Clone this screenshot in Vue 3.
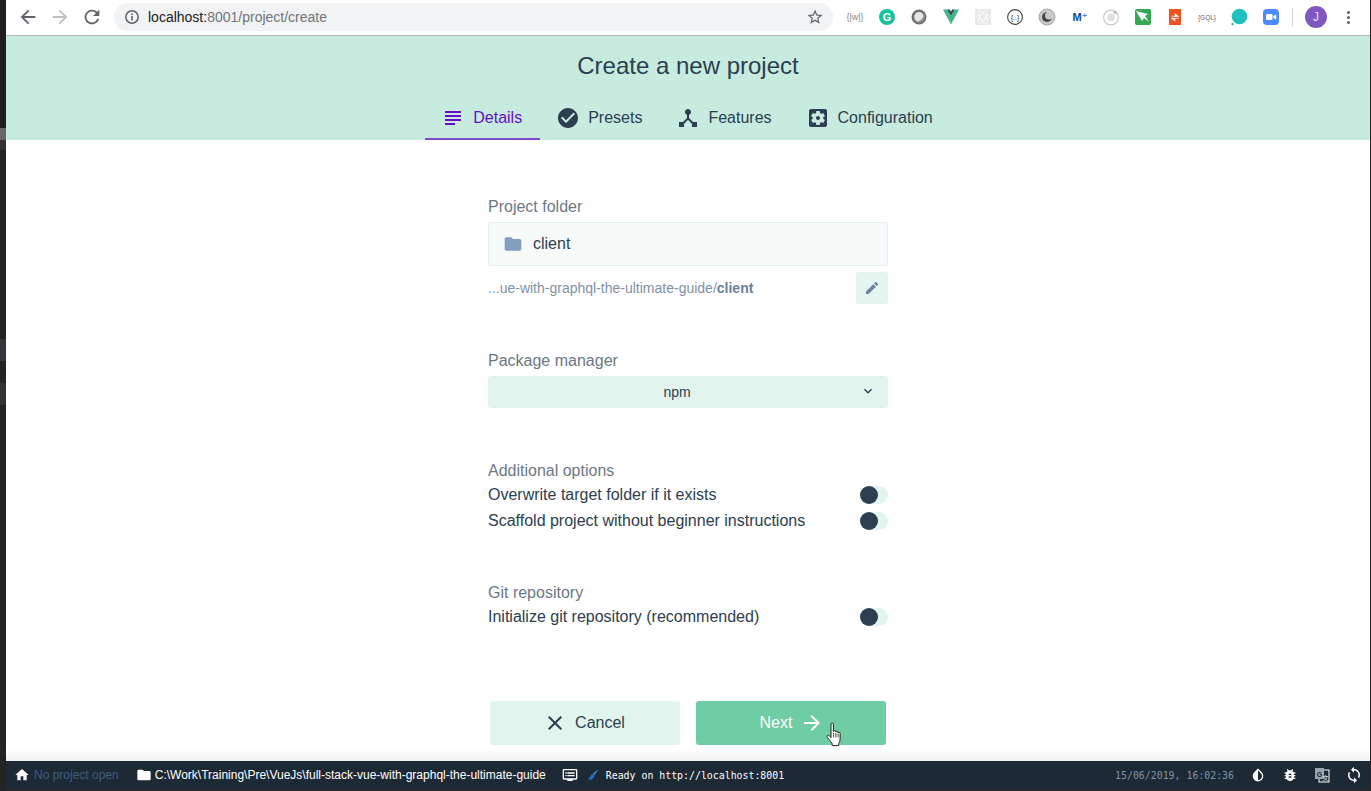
<script setup>
import { ref } from 'vue'

const tabs = [
  { label: 'Details', active: true, icon: 'M14 17H4v2h10v-2zm6-8H4v2h16V9zM4 15h16v-2H4v2zM4 5v2h16V5H4z' },
  { label: 'Presets', icon: 'M12 2C6.48 2 2 6.48 2 12s4.48 10 10 10 10-4.48 10-10S17.52 2 12 2zm-2 15l-5-5 1.41-1.41L10 14.17l7.59-7.59L19 8l-9 9z' },
  { label: 'Features', icon: 'M17 16l-4-4V8.82C14.16 8.4 15 7.3 15 6c0-1.66-1.34-3-3-3S9 4.34 9 6c0 1.3.84 2.4 2 2.82V12l-4 4H3v5h5v-3.05l4-4.2 4 4.2V21h5v-5h-4z' },
  { label: 'Configuration', icon: 'M12 10c-1.1 0-2 .9-2 2s.9 2 2 2 2-.9 2-2-.9-2-2-2zm7-7H5c-1.11 0-2 .9-2 2v14c0 1.1.89 2 2 2h14c1.11 0 2-.9 2-2V5c0-1.1-.89-2-2-2zm-1.75 9c0 .23-.02.46-.05.68l1.48 1.16c.13.11.17.3.08.45l-1.4 2.42c-.09.15-.27.21-.43.15l-1.74-.7c-.36.28-.76.51-1.18.69l-.26 1.85c-.03.17-.18.3-.35.3h-2.8c-.17 0-.32-.13-.35-.29l-.26-1.85c-.43-.18-.82-.41-1.18-.69l-1.74.7c-.16.06-.34 0-.43-.15l-1.4-2.42c-.09-.15-.05-.34.08-.45l1.48-1.16c-.03-.23-.05-.46-.05-.69 0-.23.02-.46.05-.68l-1.48-1.16c-.13-.11-.17-.3-.08-.45l1.4-2.42c.09-.15.27-.21.43-.15l1.74.7c.36-.28.76-.51 1.18-.69l.26-1.85c.03-.17.18-.3.35-.3h2.8c.17 0 .32.13.35.29l.26 1.85c.43.18.82.41 1.18.69l1.74-.7c.16-.06.34 0 .43.15l1.4 2.42c.09.15.05.34-.08.45l-1.48 1.16c.03.23.05.46.05.69z' },
]

const additional = ref([
  { label: 'Overwrite target folder if it exists', on: false },
  { label: 'Scaffold project without beginner instructions', on: false },
])
const gitOptions = ref([{ label: 'Initialize git repository (recommended)', on: false }])
</script>

<template>
  <div class="shell">
    <div class="left-strip"></div>
    <div class="main">
      <div class="browser-bar">
        <button class="nav-btn">
          <svg width="22" height="22" viewBox="0 0 24 24"><path fill="#5f6368" d="M20 11H7.83l5.59-5.59L12 4l-8 8 8 8 1.41-1.41L7.83 13H20v-2z" /></svg>
        </button>
        <button class="nav-btn">
          <svg width="22" height="22" viewBox="0 0 24 24"><path fill="#bdc1c6" d="M12 4l-1.41 1.41L16.17 11H4v2h12.17l-5.58 5.59L12 20l8-8z" /></svg>
        </button>
        <button class="nav-btn">
          <svg width="22" height="22" viewBox="0 0 24 24"><path fill="#5f6368" d="M17.65 6.35C16.2 4.9 14.21 4 12 4c-4.42 0-7.99 3.58-7.99 8s3.57 8 7.99 8c3.73 0 6.84-2.55 7.73-6h-2.08c-.82 2.33-3.04 4-5.65 4-3.31 0-6-2.69-6-6s2.69-6 6-6c1.66 0 3.14.69 4.22 1.78L13 11h7V4l-2.35 2.35z" /></svg>
        </button>
        <div class="address">
          <svg width="16" height="16" viewBox="0 0 16 16">
            <circle cx="8" cy="8" r="6.2" fill="none" stroke="#5f6368" stroke-width="1.5" />
            <rect x="7.2" y="7" width="1.6" height="4.4" fill="#5f6368" />
            <rect x="7.2" y="4.5" width="1.6" height="1.6" fill="#5f6368" />
          </svg>
          <span class="url"><b>localhost:</b>8001/project/create</span>
          <svg class="star" width="18" height="18" viewBox="0 0 24 24"><path fill="#5f6368" d="M22 9.24l-7.19-.62L12 2 9.19 8.63 2 9.24l5.46 4.73L5.82 21 12 17.27 18.18 21l-1.63-7.03L22 9.24zM12 15.4l-3.76 2.27 1-4.28-3.32-2.88 4.38-.38L12 6.1l1.71 4.04 4.38.38-3.32 2.88 1 4.28L12 15.4z" /></svg>
        </div>
        <div class="extensions">
          <span class="ext">
            <svg width="20" height="18" viewBox="0 0 20 18"><text x="10" y="12" text-anchor="middle" font-size="9" font-family="Liberation Sans, sans-serif" fill="#8a8a8a">{{ '{|w|}' }}</text></svg>
          </span>
          <span class="ext">
            <svg width="18" height="18" viewBox="0 0 18 18"><circle cx="9" cy="9" r="8" fill="#15c39a" /><text x="9" y="13" text-anchor="middle" font-size="11" font-weight="700" font-family="Liberation Sans, sans-serif" fill="#fff">G</text></svg>
          </span>
          <span class="ext">
            <svg width="18" height="18" viewBox="0 0 18 18"><circle cx="9" cy="9" r="6.2" fill="#e6e6e6" stroke="#6f6f6f" stroke-width="2.6" /><path d="M4.5 13.5a6.4 6.4 0 0 0 9-9 7.5 7.5 0 0 1-9 9z" fill="#8c8c8c" /></svg>
          </span>
          <span class="ext">
            <svg width="18" height="18" viewBox="0 0 18 18"><path d="M1 1.5h4.2L9 8l3.8-6.5H17L9 16.5z" fill="#41b883" /><path d="M5.2 1.5h2.6L9 3.7l1.2-2.2h2.6L9 8z" fill="#35495e" /></svg>
          </span>
          <span class="ext">
            <svg width="18" height="18" viewBox="0 0 18 18">
              <rect x="1" y="1" width="16" height="16" fill="#e8e8e8" />
              <g fill="none" stroke="#f8f8f8" stroke-width="1">
                <ellipse cx="9" cy="9" rx="7" ry="2.8" />
                <ellipse cx="9" cy="9" rx="7" ry="2.8" transform="rotate(60 9 9)" />
                <ellipse cx="9" cy="9" rx="7" ry="2.8" transform="rotate(120 9 9)" />
              </g>
            </svg>
          </span>
          <span class="ext">
            <svg width="18" height="18" viewBox="0 0 18 18"><circle cx="9" cy="9" r="7.4" fill="#fff" stroke="#444" stroke-width="1.1" /><text x="9" y="11.5" text-anchor="middle" font-size="7" font-family="Liberation Sans, sans-serif" fill="#333">{{ '{..}' }}</text></svg>
          </span>
          <span class="ext">
            <svg width="18" height="18" viewBox="0 0 18 18"><circle cx="9" cy="9" r="8" fill="#c9c9c9" stroke="#999" stroke-width=".8" /><circle cx="9" cy="9" r="5" fill="#444" /><circle cx="11" cy="7.6" r="4" fill="#c9c9c9" /></svg>
          </span>
          <span class="ext">
            <svg width="20" height="18" viewBox="0 0 20 18"><text x="8" y="13" text-anchor="middle" font-size="11" font-weight="700" font-family="Liberation Sans, sans-serif" fill="#0b4a8f">M</text><text x="15.5" y="10" text-anchor="middle" font-size="8" font-weight="700" font-family="Liberation Sans, sans-serif" fill="#3d8fd0">+</text></svg>
          </span>
          <span class="ext">
            <svg width="18" height="18" viewBox="0 0 18 18"><circle cx="9" cy="9.5" r="7.4" fill="#fff" stroke="#c8c8c8" stroke-width="1.2" /><circle cx="9" cy="9.5" r="3.8" fill="#dedede" /><circle cx="13" cy="4.5" r="1.2" fill="#aaa" /></svg>
          </span>
          <span class="ext">
            <svg width="18" height="18" viewBox="0 0 18 18"><rect x="1" y="1" width="16" height="16" rx="2" fill="#34a853" /><path d="M2 3l12 3-3 2 4 6-5-4-2 3z" fill="#fff" /></svg>
          </span>
          <span class="ext">
            <svg width="18" height="18" viewBox="0 0 18 18"><rect x="3" y="1" width="12" height="16" fill="#f4511e" /><path d="M5 8h4V5.5l4 3.2H9M13 10.5H9V13l-4-3h4" fill="#fff" stroke="#fff" stroke-width=".5" /></svg>
          </span>
          <span class="ext">
            <svg width="20" height="18" viewBox="0 0 20 18"><text x="10" y="11.5" text-anchor="middle" font-size="6.5" font-family="Liberation Sans, sans-serif" fill="#666">{{ '{GQL}' }}</text></svg>
          </span>
          <span class="ext">
            <svg width="18" height="18" viewBox="0 0 18 18"><circle cx="9.5" cy="8.5" r="7.8" fill="#1fc0bd" /><circle cx="2.5" cy="16" r="1.2" fill="#1fc0bd" /></svg>
          </span>
          <span class="ext">
            <svg width="18" height="18" viewBox="0 0 18 18"><rect x="1" y="1" width="16" height="16" rx="4" fill="#4a8cff" /><rect x="4" y="6" width="6.5" height="6" rx="1.2" fill="#fff" /><path d="M11.2 8.3l3-2v5.4l-3-2z" fill="#fff" /></svg>
          </span>
          <span class="divider"></span>
          <span class="avatar">J</span>
          <span class="dots"><i></i><i></i><i></i></span>
        </div>
      </div>

      <header class="page-header">
        <h1>Create a new project</h1>
        <nav class="tabs">
          <a v-for="tab in tabs" :key="tab.label" class="tab" :class="{ 'tab--active': tab.active }">
            <svg width="24" height="24" viewBox="0 0 24 24"><path fill="currentColor" :d="tab.icon" /></svg>
            <span>{{ tab.label }}</span>
          </a>
        </nav>
      </header>

      <section class="content">
        <div class="form">
          <div class="form-group">
            <div class="group-title">Project folder</div>
            <div class="folder-input">
              <svg width="20" height="20" viewBox="0 0 24 24"><path fill="#849fbd" d="M10 4H4c-1.1 0-1.99.9-1.99 2L2 18c0 1.1.9 2 2 2h16c1.1 0 2-.9 2-2V8c0-1.1-.9-2-2-2h-8l-2-2z" /></svg>
              <span>client</span>
            </div>
            <div class="path-row">
              <span class="path">...ue-with-graphql-the-ultimate-guide/<b>client</b></span>
              <button class="edit-btn">
                <svg width="16" height="16" viewBox="0 0 24 24"><path fill="#6b8199" d="M3 17.25V21h3.75L17.81 9.94l-3.75-3.75L3 17.25zM20.71 7.04c.39-.39.39-1.02 0-1.41l-2.34-2.34c-.39-.39-1.02-.39-1.41 0l-1.83 1.83 3.75 3.75 1.83-1.83z" /></svg>
              </button>
            </div>
          </div>

          <div class="form-group group-manager">
            <div class="group-title">Package manager</div>
            <div class="select">
              <span>npm</span>
              <svg class="chevron" width="16" height="16" viewBox="0 0 24 24"><path fill="#2c3e50" d="M16.59 8.59L12 13.17 7.41 8.59 6 10l6 6 6-6z" /></svg>
            </div>
          </div>

          <div class="form-group group-options">
            <div class="group-title">Additional options</div>
            <div v-for="opt in additional" :key="opt.label" class="option">
              <span>{{ opt.label }}</span>
              <span class="switch"><i></i></span>
            </div>
          </div>

          <div class="form-group group-git">
            <div class="group-title">Git repository</div>
            <div v-for="opt in gitOptions" :key="opt.label" class="option">
              <span>{{ opt.label }}</span>
              <span class="switch"><i></i></span>
            </div>
          </div>
        </div>

        <div class="actions">
          <button class="btn btn--cancel">
            <svg width="24" height="24" viewBox="0 0 24 24"><path fill="currentColor" d="M19 6.41L17.59 5 12 10.59 6.41 5 5 6.41 10.59 12 5 17.59 6.41 19 12 13.41 17.59 19 19 17.59 13.41 12z" /></svg>
            <span>Cancel</span>
          </button>
          <button class="btn btn--next">
            <span>Next</span>
            <svg width="24" height="24" viewBox="0 0 24 24"><path fill="currentColor" d="M12 4l-1.41 1.41L16.17 11H4v2h12.17l-5.58 5.59L12 20l8-8z" /></svg>
            <svg class="hand" width="17" height="25" viewBox="0 0 17 25">
              <path fill="#fff" stroke="#222" stroke-width="1" stroke-linejoin="round" d="M5 2.2c0-1.5 2.4-1.5 2.4 0v7.3c0-1.3 2.3-1.3 2.3 0v.6c0-1.2 2.2-1.2 2.2.1v.8c0-1.1 2.2-1 2.2.3v5.7c0 2.2-.8 3.2-1.4 4.6v2H6.2v-2c-1-1.5-2.2-2.6-3.4-4.4-.7-1-2-2.5-1.6-3.4.5-1.1 1.8-.7 2.4.1L5 15.5z" />
              <path fill="none" stroke="#222" stroke-width=".8" d="M7.6 11v4.5M9.9 11v4.5M12.1 11.5v4" />
            </svg>
          </button>
        </div>
      </section>

      <footer class="status-bar">
        <div class="status-item status-project">
          <svg width="16" height="16" viewBox="0 0 24 24"><path fill="#fff" d="M10 20v-6h4v6h5v-8h3L12 3 2 12h3v8z" /></svg>
          <span>No project open</span>
        </div>
        <div class="status-item status-cwd">
          <svg width="16" height="16" viewBox="0 0 24 24"><path fill="#fff" d="M10 4H4c-1.1 0-1.99.9-1.99 2L2 18c0 1.1.9 2 2 2h16c1.1 0 2-.9 2-2V8c0-1.1-.9-2-2-2h-8l-2-2z" /></svg>
          <span>C:\Work\Training\Pre\VueJs\full-stack-vue-with-graphql-the-ultimate-guide</span>
        </div>
        <div class="status-item status-log">
          <svg width="16" height="16" viewBox="0 0 24 24"><path fill="#fff" d="M21 3H3c-1.1 0-2 .9-2 2v12c0 1.1.9 2 2 2h5v2h8v-2h5c1.1 0 1.99-.9 1.99-2L23 5c0-1.1-.9-2-2-2zm0 14H3V5h18v12zm-2-9H8v2h11V8zm0 4H8v2h11v-2zM7 8H5v2h2V8zm0 4H5v2h2v-2z" /></svg>
          <svg class="brush" width="12" height="12" viewBox="0 0 12 12"><path d="M11.5.5L6 4.5 7.5 6z" fill="#4a90d9" /><path d="M5.5 5C3.5 5.5 4 8 1 10c2 1.5 5.5.5 6.5-3.5z" fill="#2a6fc0" /></svg>
          <span>Ready on http://localhost:8001</span>
        </div>
        <div class="status-right">
          <span class="clock">15/06/2019, 16:02:36</span>
          <span class="status-icon">
            <svg width="16" height="16" viewBox="0 0 24 24"><path fill="#fff" transform="matrix(-1 0 0 1 24 0)" d="M17.66 7.93L12 2.27 6.34 7.93c-3.12 3.12-3.12 8.19 0 11.31C7.9 20.8 9.95 21.58 12 21.58c2.05 0 4.1-.78 5.66-2.34 3.12-3.12 3.12-8.19 0-11.31zM12 19.59c-1.6 0-3.11-.62-4.24-1.76C6.62 16.69 6 15.19 6 13.59s.62-3.11 1.76-4.24L12 5.1v14.49z" /></svg>
          </span>
          <span class="status-icon">
            <svg width="16" height="16" viewBox="0 0 24 24"><path fill="#fff" d="M20 8h-2.81c-.45-.78-1.07-1.45-1.82-1.96L17 4.41 15.59 3l-2.17 2.17C12.96 5.06 12.49 5 12 5c-.49 0-.96.06-1.41.17L8.41 3 7 4.41l1.62 1.63C7.88 6.55 7.26 7.22 6.81 8H4v2h2.09c-.05.33-.09.66-.09 1v1H4v2h2v1c0 .34.04.67.09 1H4v2h2.81c1.04 1.79 2.97 3 5.19 3s4.15-1.21 5.19-3H20v-2h-2.09c.05-.33.09-.66.09-1v-1h2v-2h-2v-1c0-.34-.04-.67-.09-1H20V8zm-6 8h-4v-2h4v2zm0-4h-4v-2h4v2z" /></svg>
          </span>
          <span class="status-icon">
            <svg width="16" height="16" viewBox="0 0 16 16">
              <rect x="5" y="3" width="10" height="12" fill="#1d2935" stroke="#fff" stroke-width="1" />
              <rect x="1" y="1" width="9" height="11" fill="#9aa5af" />
              <text x="5.5" y="9.5" text-anchor="middle" font-size="7" font-weight="700" font-family="Liberation Sans, sans-serif" fill="#1d2935">G</text>
              <text x="11.5" y="13" text-anchor="middle" font-size="6" font-family="Noto Sans CJK SC, sans-serif" fill="#fff">文</text>
            </svg>
          </span>
          <span class="status-icon">
            <svg width="18" height="18" viewBox="0 0 24 24"><path fill="#fff" d="M12 4V1L8 5l4 4V6c3.31 0 6 2.69 6 6 0 1.01-.25 1.97-.7 2.8l1.46 1.46C19.54 15.03 20 13.57 20 12c0-4.42-3.58-8-8-8zm0 14c-3.31 0-6-2.69-6-6 0-1.01.25-1.97.7-2.8L5.24 7.74C4.46 8.97 4 10.43 4 12c0 4.42 3.58 8 8 8v3l4-4-4-4v3z" /></svg>
          </span>
        </div>
      </footer>
      <div class="bottom-edge"></div>
    </div>
    <div class="right-strip"></div>
  </div>
</template>

<style>
html,
body {
  margin: 0;
  overflow: hidden;
}
</style>

<style scoped>
.shell {
  display: flex;
  width: 1371px;
  height: 791px;
  font-family: 'Liberation Sans', Arial, sans-serif;
  color: #2c3e50;
  background: #fff;
}

.left-strip {
  width: 6px;
  flex-shrink: 0;
  background: linear-gradient(
    to bottom,
    #1f1f1f 0 128px,
    #666 128px 140px,
    #333 140px 150px,
    #232323 150px 339px,
    #35353c 339px 361px,
    #232323 361px 383px,
    #333 383px 405px,
    #232323 405px
  );
}

.right-strip {
  width: 1px;
  flex-shrink: 0;
  background: #222;
}

.main {
  flex: 1;
  min-width: 0;
  display: flex;
  flex-direction: column;
}

/* browser chrome */
.browser-bar {
  height: 34px;
  padding-left: 6px;
  padding-bottom: 1px;
  display: flex;
  align-items: center;
  flex-shrink: 0;
  background: #fff;
  border-bottom: 1px solid #b6b6b6;
}

.nav-btn {
  width: 32px;
  height: 28px;
  padding: 0;
  border: none;
  background: none;
  display: flex;
  align-items: center;
  justify-content: center;
}

.address {
  width: 719px;
  height: 28px;
  margin-left: 6px;
  padding: 0 9px 0 10px;
  box-sizing: border-box;
  display: flex;
  align-items: center;
  gap: 8px;
  border-radius: 14px;
  background: #f1f3f4;
}

.url {
  flex: 1;
  font-size: 14px;
  color: #70757a;
}

.url b {
  font-weight: 400;
  color: #202124;
}

.extensions {
  display: flex;
  align-items: center;
  margin-left: 6px;
}

.ext {
  width: 32px;
  height: 28px;
  display: flex;
  align-items: center;
  justify-content: center;
}

.divider {
  width: 1px;
  height: 18px;
  margin: 0 7px 0 5px;
  background: #d0d2d4;
}

.avatar {
  width: 22px;
  height: 22px;
  margin: 0 5px;
  border-radius: 50%;
  background: #7e57c2;
  color: #e8e0f5;
  font-size: 12px;
  line-height: 22px;
  text-align: center;
}

.dots {
  width: 32px;
  display: flex;
  flex-direction: column;
  align-items: center;
  gap: 2px;
}

.dots i {
  width: 3px;
  height: 3px;
  border-radius: 50%;
  background: #5f6368;
}

/* header */
.page-header {
  height: 104px;
  flex-shrink: 0;
  display: flex;
  flex-direction: column;
  background: #c7ebdf;
}

.page-header h1 {
  margin: 0;
  height: 64px;
  line-height: 60px;
  font-size: 24px;
  font-weight: 400;
  text-align: center;
}

.tabs {
  display: flex;
  justify-content: center;
  height: 40px;
}

.tab {
  display: flex;
  align-items: center;
  gap: 8px;
  height: 40px;
  box-sizing: border-box;
  padding: 0 18px 4px 16px;
  font-size: 16px;
}

.tab--active {
  color: #6a0dc9;
  border-bottom: 2px solid #8347d1;
  padding-bottom: 2px;
}

/* form */
.content {
  flex: 1;
  min-height: 0;
  display: flex;
  flex-direction: column;
  align-items: center;
  background: linear-gradient(to bottom, #fff calc(100% - 12px), #f1f1f1);
}

.form {
  width: 400px;
  padding-top: 57px;
  font-size: 16px;
}

.group-title {
  height: 20px;
  line-height: 20px;
  margin-bottom: 5px;
  color: #2c3e50;
  opacity: 0.7;
}

.folder-input {
  height: 44px;
  box-sizing: border-box;
  padding: 0 14px;
  display: flex;
  align-items: center;
  gap: 10px;
  border: 1px solid #e1f3ed;
  border-radius: 3px;
  background: #f6fbf9;
}

.path-row {
  margin-top: 6px;
  height: 32px;
  display: flex;
  align-items: center;
  justify-content: space-between;
}

.path {
  font-size: 14px;
  color: #7f92a5;
}

.path b {
  color: #6b8199;
}

.edit-btn {
  width: 32px;
  height: 32px;
  padding: 0;
  border: none;
  border-radius: 3px;
  background: #e6f5f0;
  display: flex;
  align-items: center;
  justify-content: center;
}

.group-manager {
  margin-top: 47px;
}

.select {
  position: relative;
  height: 32px;
  display: flex;
  align-items: center;
  justify-content: center;
  padding-right: 22px;
  box-sizing: border-box;
  border-radius: 3px;
  background: #e2f4ee;
  font-size: 14px;
}

.chevron {
  position: absolute;
  right: 12px;
  top: 7px;
}

.group-options {
  margin-top: 53px;
}

.group-options .group-title,
.group-git .group-title {
  margin-bottom: 1px;
}

.group-git {
  margin-top: 49px;
}

.option {
  height: 26px;
  display: flex;
  align-items: center;
  justify-content: space-between;
}

.switch {
  width: 28px;
  height: 18px;
  border-radius: 9px;
  background: #e2f4ee;
}

.switch i {
  display: block;
  width: 18px;
  height: 18px;
  border-radius: 50%;
  background: #2c3e50;
}

.actions {
  margin-top: auto;
  padding-bottom: 16px;
  display: flex;
  gap: 16px;
}

.btn {
  position: relative;
  width: 190px;
  height: 44px;
  padding: 0;
  border: none;
  border-radius: 3px;
  display: flex;
  align-items: center;
  justify-content: center;
  gap: 8px;
  font-family: inherit;
  font-size: 16px;
}

.btn--cancel {
  padding-right: 2px;
  background: #e2f4ee;
  color: #2c3e50;
}

.btn--next {
  padding-left: 2px;
  background: #6fcda3;
  color: #fff;
}

.hand {
  position: absolute;
  left: 130px;
  top: 21px;
}

/* status bar */
.status-bar {
  height: 28px;
  flex-shrink: 0;
  display: flex;
  align-items: center;
  background: #1d2935;
  color: #fff;
  font-size: 12px;
}

.status-item {
  display: flex;
  align-items: center;
}

.status-project {
  margin-left: 8px;
  gap: 4px;
  color: #3f5d80;
}

.status-cwd {
  margin-left: 17px;
  gap: 3px;
}

.status-log {
  margin-left: 16px;
  font-family: 'DejaVu Sans Mono', 'Liberation Mono', monospace;
  font-size: 9.9px;
}

.brush {
  margin: 0 7px 0 9px;
}

.status-right {
  margin-left: auto;
  display: flex;
  align-items: center;
}

.clock {
  font-family: 'DejaVu Sans Mono', 'Liberation Mono', monospace;
  font-size: 9.9px;
  color: #8093a5;
  margin-right: 8px;
}

.status-icon {
  width: 32px;
  display: flex;
  align-items: center;
  justify-content: center;
}

.bottom-edge {
  height: 2px;
  flex-shrink: 0;
  background: #2a2a2a;
}
</style>
